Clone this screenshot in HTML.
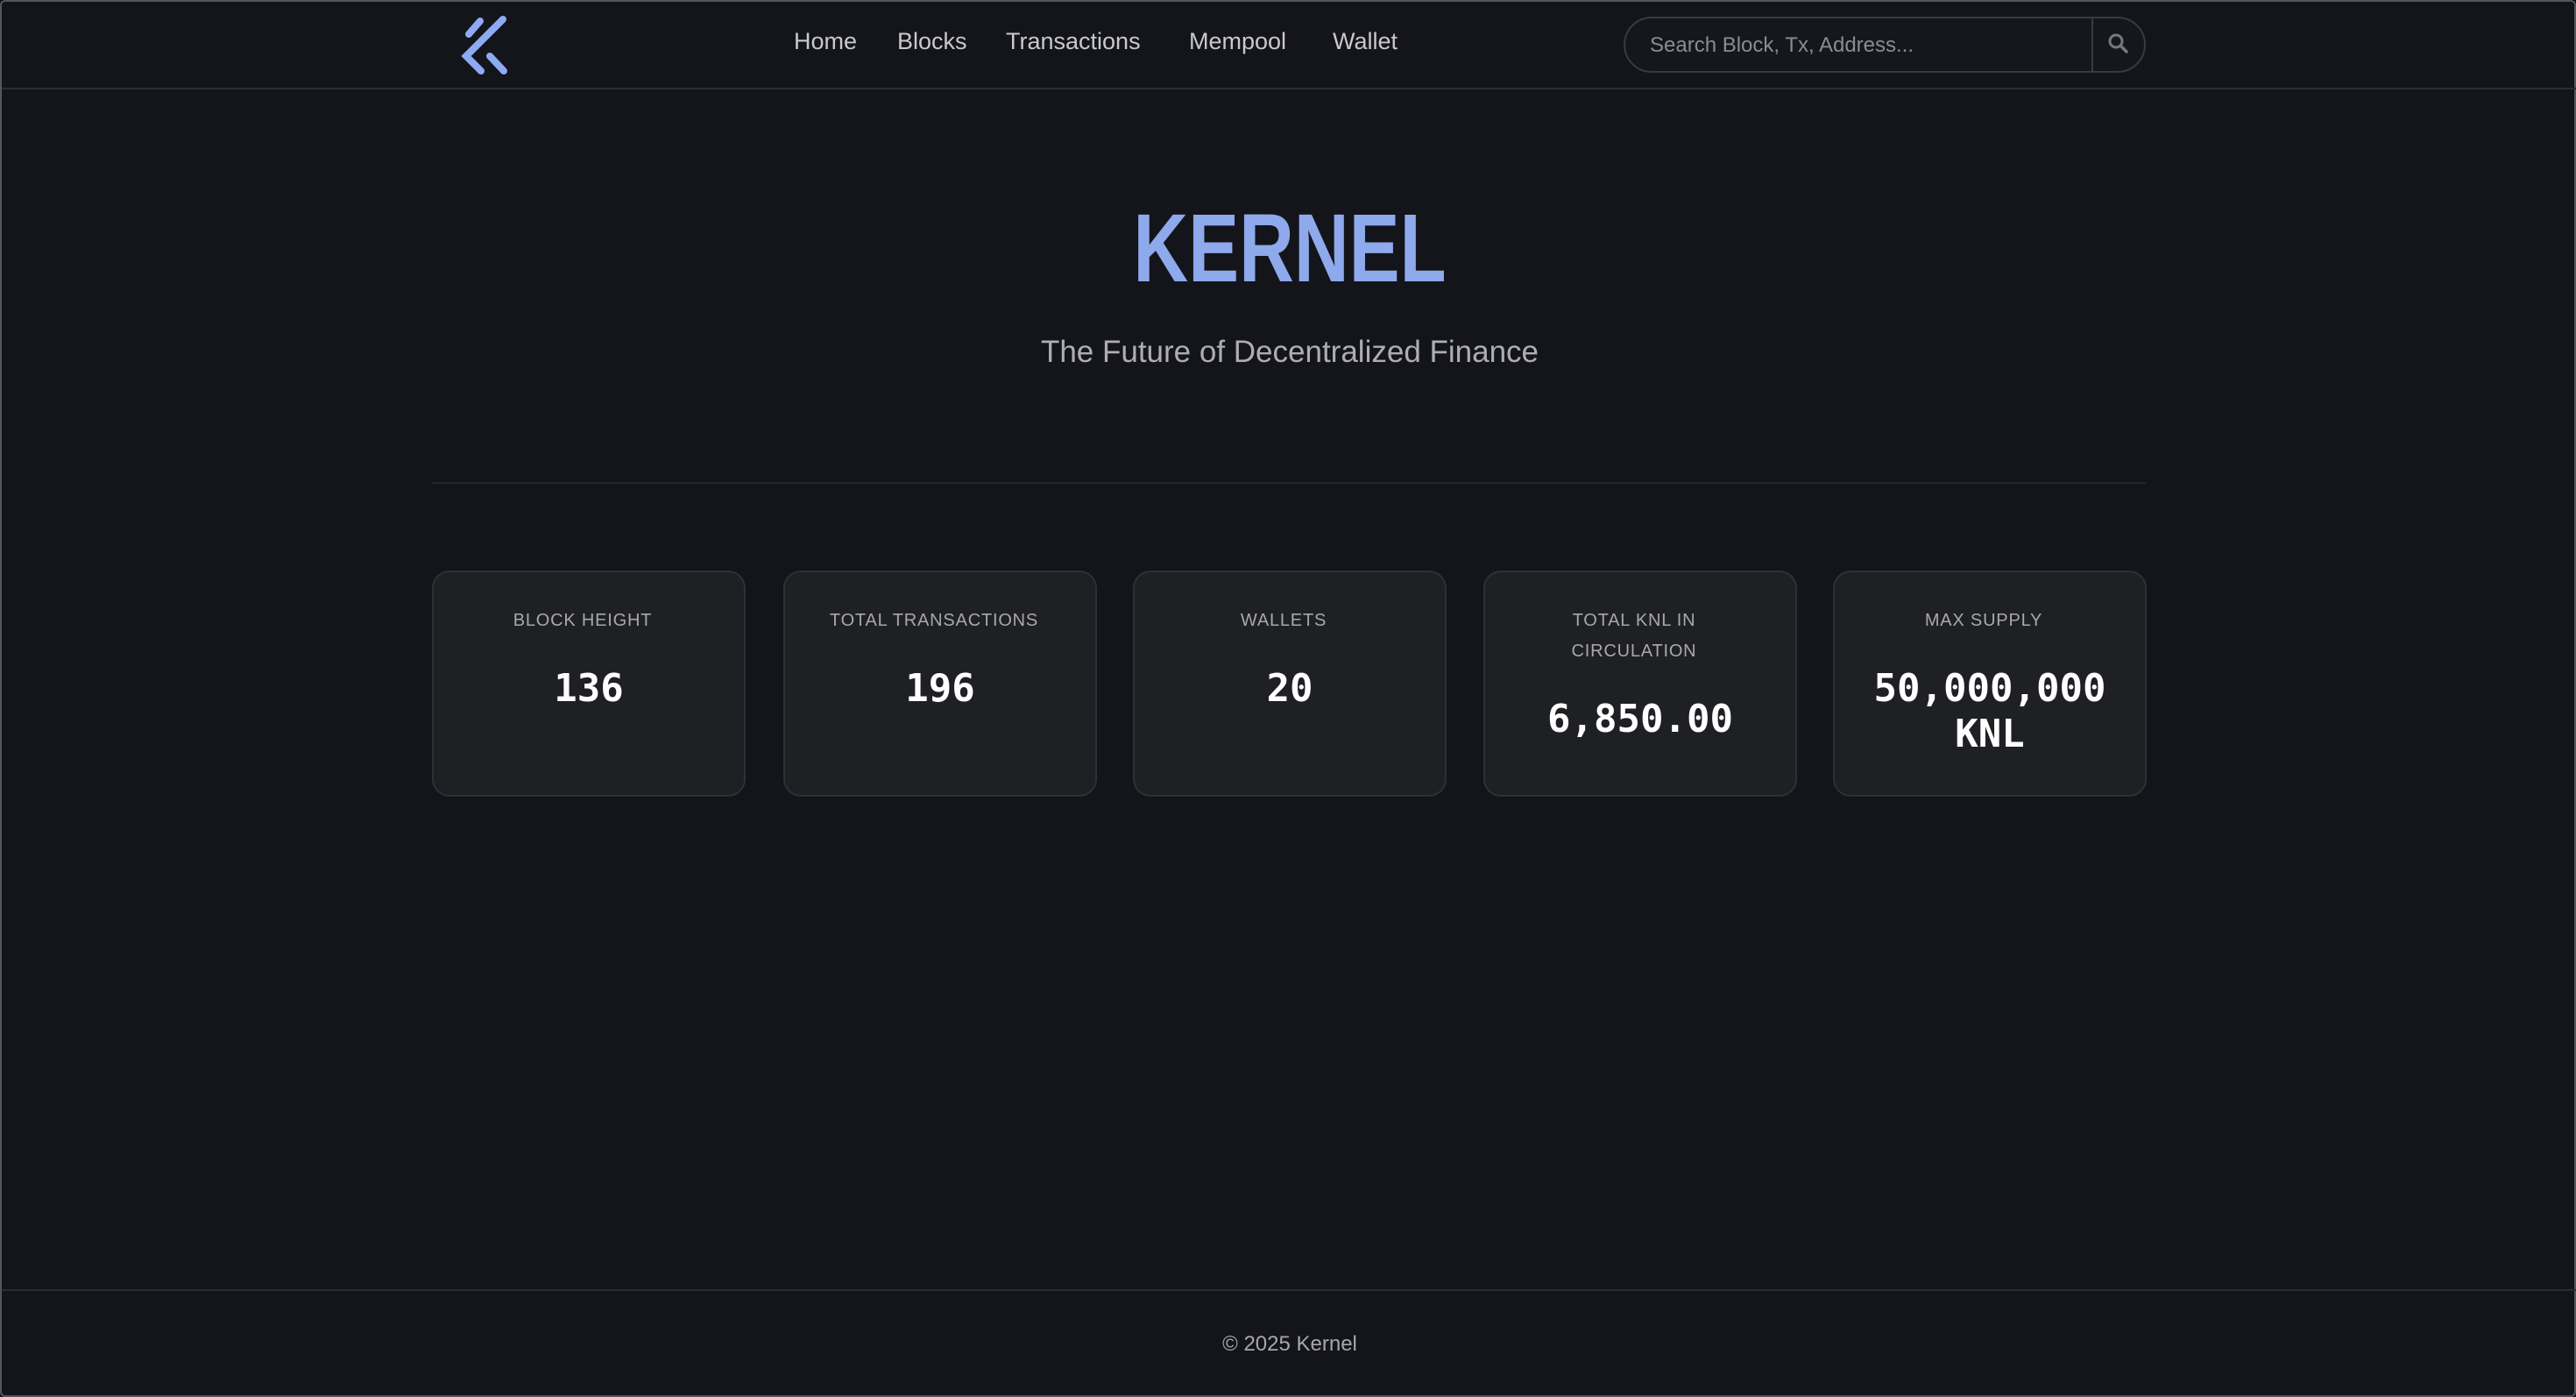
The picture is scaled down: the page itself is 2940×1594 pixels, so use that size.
<!DOCTYPE html>
<html><head><meta charset="utf-8"><style>
*{box-sizing:border-box;margin:0;padding:0}
body{width:2940px;height:1594px;background:#14151a;font-family:"Liberation Sans",sans-serif;position:relative;overflow:hidden;border:2px solid #55565b;border-radius:6px}
.hdr{position:absolute;left:0;top:0;width:2940px;height:100px;border-bottom:2px solid #2c2d33}
.nav{position:absolute;top:30px;font-size:27px;color:#c9c9cc}
.search{position:absolute;left:1851px;top:17px;width:596px;height:64px;border:2px solid #3a3b41;border-radius:32px;background:#16171c}
.search span{position:absolute;left:28px;top:17px;font-size:24px;color:#8b8c90}
.search .div{position:absolute;left:532px;top:0;width:2px;height:60px;background:#3a3b41}
h1{position:absolute;left:0;width:2940px;top:218px;text-align:center;font-size:110px;font-weight:bold;color:#8ea9ec;transform:scaleX(0.79)}
.sub{position:absolute;left:0;width:2940px;top:380px;text-align:center;font-size:35px;color:#aeaeb2}
.hr{position:absolute;left:491px;top:548px;width:1956px;height:2px;background:#26272c}
.card{position:absolute;top:649px;width:358px;height:258px;background:#1f2024;border:2px solid #2f3035;border-radius:20px;text-align:center}
.lbl{margin-top:38px;font-size:20px;letter-spacing:0.8px;color:#a8a8ac;line-height:35px;padding:0 50px 0 36px}
.val{margin-top:34px;font-family:"DejaVu Sans Mono","Liberation Mono",monospace;font-weight:bold;font-size:44px;color:#fff;line-height:52px}
.ftr{position:absolute;left:0;top:1469px;width:2940px;height:2px;background:#2c2d33}
.ft{position:absolute;left:0;width:2940px;top:1518px;text-align:center;font-size:24px;color:#a8a8ac}
</style></head><body>
<div class="hdr">
<svg style="position:absolute;left:0;top:0" width="700" height="100"><g stroke="#8eaaf5" stroke-width="8" stroke-linecap="round" fill="none"><path d="M533 37L546 22"/><path d="M572 20L530 62L547 79"/><path d="M557 62L573 79"/></g></svg>
<div class="nav" style="left:904px">Home</div>
<div class="nav" style="left:1022px">Blocks</div>
<div class="nav" style="left:1146px">Transactions</div>
<div class="nav" style="left:1355px">Mempool</div>
<div class="nav" style="left:1519px">Wallet</div>
<div class="search"><span>Search Block, Tx, Address...</span><div class="div"></div>
<svg style="position:absolute;left:550px;top:16px" width="26" height="26" viewBox="0 0 26 26"><circle cx="10" cy="10" r="7" stroke="#77787d" stroke-width="3" fill="none"/><path d="M15 15L22 22" stroke="#77787d" stroke-width="3.5" stroke-linecap="round"/></svg></div>
</div>
<h1>KERNEL</h1>
<div class="sub">The Future of Decentralized Finance</div>
<div class="hr"></div>
<div class="card" style="left:491px"><div class="lbl">BLOCK HEIGHT</div><div class="val">136</div></div>
<div class="card" style="left:892px"><div class="lbl">TOTAL TRANSACTIONS</div><div class="val">196</div></div>
<div class="card" style="left:1291px"><div class="lbl">WALLETS</div><div class="val">20</div></div>
<div class="card" style="left:1691px"><div class="lbl">TOTAL KNL IN CIRCULATION</div><div class="val">6,850.00</div></div>
<div class="card" style="left:2090px"><div class="lbl">MAX SUPPLY</div><div class="val">50,000,000<br>KNL</div></div>
<div class="ftr"></div>
<div class="ft">© 2025 Kernel</div>
</body></html>
